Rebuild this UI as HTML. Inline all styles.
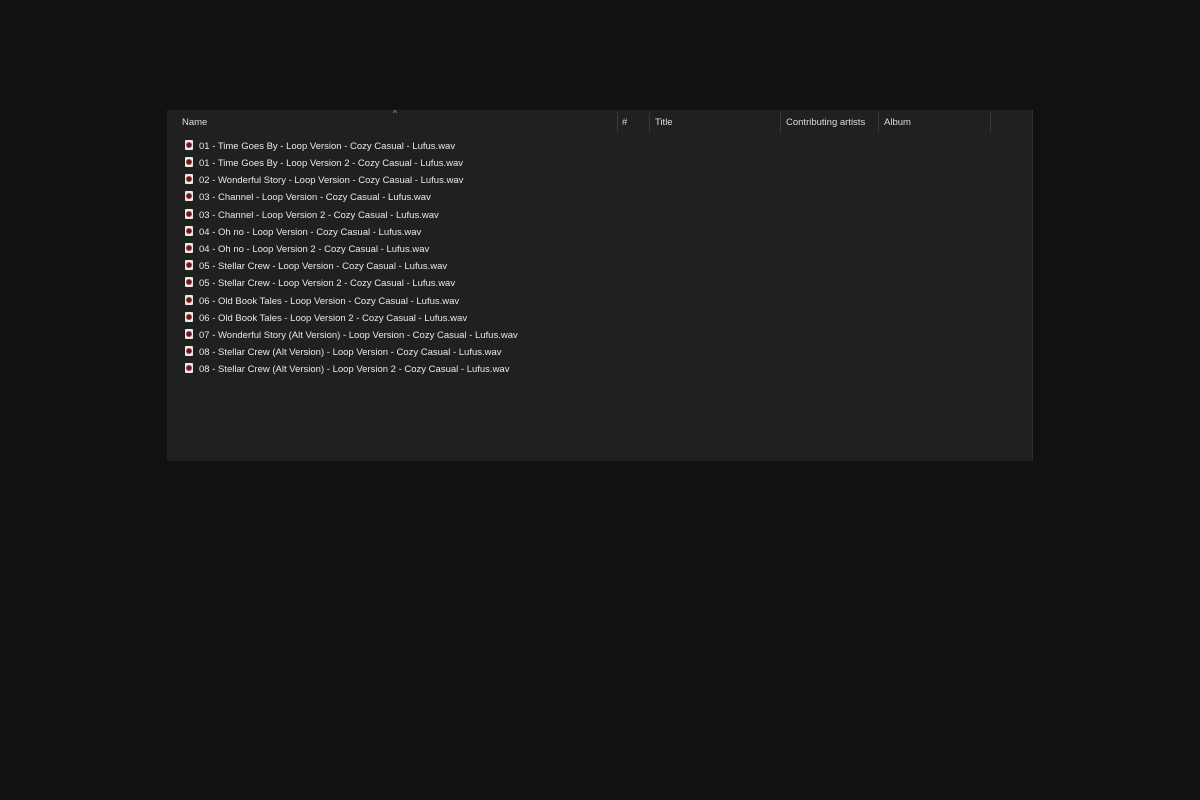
<!DOCTYPE html>
<html><head><style>
body{margin:0;width:1200px;height:800px;background:#111111;overflow:hidden;font-family:"Liberation Sans",sans-serif;}
#p{position:absolute;left:167px;top:110px;width:865px;height:351px;background:#202020;border-right:1px solid #2e2e2e;}
.h{position:absolute;top:7px;font-size:9.5px;color:#dcdcdc;}
.d{position:absolute;top:2px;width:1px;height:20px;background:#3a3a3a;}
.r{position:absolute;left:18px;height:17px;font-size:9.5px;color:#e8e8e8;line-height:17px;white-space:nowrap;margin-top:1px;}
.i{display:inline-block;width:8px;height:10px;background:#e9e9e9;vertical-align:-1px;margin-right:6px;position:relative;border-radius:1px;}
.i:after{content:"";position:absolute;left:2px;top:3px;width:4px;height:4px;border-radius:50%;background:#4a2030;box-shadow:0 0 0 1px #b33;}
</style></head><body>
<div id="p">
<div class="h" style="left:15px">Name</div>
<div style="position:absolute;left:226px;top:-1px;font-size:8px;color:#aaa">^</div>
<div class="d" style="left:450px"></div>
<div class="h" style="left:455px">#</div>
<div class="d" style="left:482px"></div>
<div class="h" style="left:488px">Title</div>
<div class="d" style="left:613px"></div>
<div class="h" style="left:619px">Contributing artists</div>
<div class="d" style="left:711px"></div>
<div class="h" style="left:717px">Album</div>
<div class="d" style="left:823px"></div>
<div class="r" style="top:27px"><span class="i"></span>01 - Time Goes By - Loop Version - Cozy Casual - Lufus.wav</div>
<div class="r" style="top:44px"><span class="i"></span>01 - Time Goes By - Loop Version 2 - Cozy Casual - Lufus.wav</div>
<div class="r" style="top:61px"><span class="i"></span>02 - Wonderful Story - Loop Version - Cozy Casual - Lufus.wav</div>
<div class="r" style="top:78px"><span class="i"></span>03 - Channel - Loop Version - Cozy Casual - Lufus.wav</div>
<div class="r" style="top:96px"><span class="i"></span>03 - Channel - Loop Version 2 - Cozy Casual - Lufus.wav</div>
<div class="r" style="top:113px"><span class="i"></span>04 - Oh no - Loop Version - Cozy Casual - Lufus.wav</div>
<div class="r" style="top:130px"><span class="i"></span>04 - Oh no - Loop Version 2 - Cozy Casual - Lufus.wav</div>
<div class="r" style="top:147px"><span class="i"></span>05 - Stellar Crew - Loop Version - Cozy Casual - Lufus.wav</div>
<div class="r" style="top:164px"><span class="i"></span>05 - Stellar Crew - Loop Version 2 - Cozy Casual - Lufus.wav</div>
<div class="r" style="top:182px"><span class="i"></span>06 - Old Book Tales - Loop Version - Cozy Casual - Lufus.wav</div>
<div class="r" style="top:199px"><span class="i"></span>06 - Old Book Tales - Loop Version 2 - Cozy Casual - Lufus.wav</div>
<div class="r" style="top:216px"><span class="i"></span>07 - Wonderful Story (Alt Version) - Loop Version - Cozy Casual - Lufus.wav</div>
<div class="r" style="top:233px"><span class="i"></span>08 - Stellar Crew (Alt Version) - Loop Version - Cozy Casual - Lufus.wav</div>
<div class="r" style="top:250px"><span class="i"></span>08 - Stellar Crew (Alt Version) - Loop Version 2 - Cozy Casual - Lufus.wav</div>
</div>
</body></html>
